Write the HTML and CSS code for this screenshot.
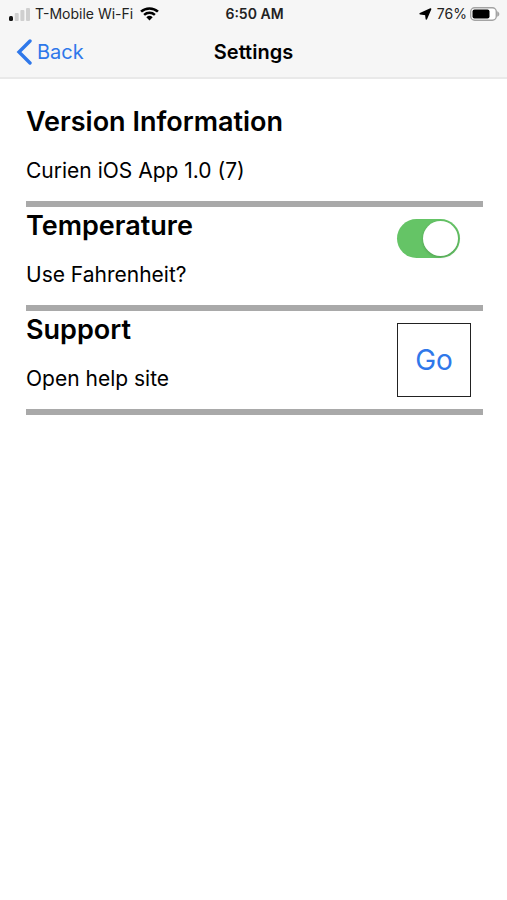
FILE: index.html
```html
<!DOCTYPE html>
<html lang="en">
<head>
    <meta charset="UTF-8">
    <meta name="viewport" content="width=device-width, initial-scale=1.0">
    <title>Settings</title>
    <link rel="stylesheet" href="styles.css">
</head>
<body>
    <header class="header">
        <div class="status-bar">
            <div class="status-left">
                <svg width="21" height="14" viewBox="0 0 21 14" aria-hidden="true">
                    <rect x="0" y="9" width="4" height="5" rx="1.5" fill="#111"/>
                    <rect x="5.7" y="6" width="4" height="8" rx="1" fill="#cfcfcf"/>
                    <rect x="11.4" y="3" width="4" height="11" rx="1" fill="#cfcfcf"/>
                    <rect x="17" y="1" width="4" height="13" rx="1" fill="#cfcfcf"/>
                </svg>
                <span>T-Mobile Wi-Fi</span>
                <svg class="wifi" width="19" height="14" viewBox="0 0 18 14" preserveAspectRatio="none" aria-hidden="true">
                    <path d="M1 4.6a11.6 11.6 0 0 1 16 0" fill="none" stroke="#000" stroke-width="2.5"/>
                    <path d="M3.9 7.8a7.4 7.4 0 0 1 10.2 0" fill="none" stroke="#000" stroke-width="2.3"/>
                    <path d="M6 10.2a4.4 4.4 0 0 1 6 0L9 13.4z" fill="#000"/>
                </svg>
            </div>
            <span class="time">6:50 AM</span>
            <div class="status-right">
                <svg class="location" width="13" height="12" viewBox="0 0 13 12" aria-hidden="true">
                    <path d="M11.6 1L7.4 10.8 6.8 6.4 1.2 5.8z" fill="#000" stroke="#000" stroke-width="1.6" stroke-linejoin="round"/>
                </svg>
                <span>76%</span>
                <svg width="30" height="14" viewBox="0 0 30 14" aria-hidden="true">
                    <rect x=".7" y=".7" width="25.6" height="12.6" rx="4" fill="#fff" stroke="#a3a3a3" stroke-width="1.4"/>
                    <rect x="2.5" y="2.5" width="17" height="9" rx="2" fill="#000"/>
                    <path d="M27.2 4.2c2.8 1 2.8 4.6 0 5.6z" fill="#a3a3a3"/>
                </svg>
            </div>
        </div>
        <nav class="nav-bar">
            <a class="back" href="#">
                <svg width="16" height="26" viewBox="0 0 16 26" aria-hidden="true">
                    <path d="M14 2L3 13l11 11" fill="none" stroke="#2f78ea" stroke-width="3.4" stroke-linecap="round" stroke-linejoin="miter"/>
                </svg>
                Back
            </a>
            <h1>Settings</h1>
        </nav>
    </header>

    <main class="settings">
        <section class="setting">
            <div class="setting-text">
                <h2>Version Information</h2>
                <p>Curien iOS App 1.0 (7)</p>
            </div>
        </section>
        <section class="setting">
            <div class="setting-text">
                <h2>Temperature</h2>
                <p><label for="fahrenheit">Use Fahrenheit?</label></p>
            </div>
            <div class="setting-control">
                <input class="switch" type="checkbox" id="fahrenheit" checked>
            </div>
        </section>
        <section class="setting">
            <div class="setting-text">
                <h2>Support</h2>
                <p>Open help site</p>
            </div>
            <div class="setting-control">
                <button class="go" type="button">Go</button>
            </div>
        </section>
    </main>
</body>
</html>
```
FILE: styles.css
```css
* {
    box-sizing: border-box;
}
body {
    font-family: Inter, "Liberation Sans", sans-serif;
    background-color: #fff;
    color: #000;
    margin: 0;
}
h1, h2, p {
    margin: 0;
}
.header {
    background: #f6f6f6;
    border-bottom: 2px solid #e9e9e9;
}
.status-bar {
    display: grid;
    grid-template-columns: 1fr auto 1fr;
    align-items: center;
    height: 27px;
    padding: 0 7px 0 9px;
    font-size: 14px;
    line-height: 18px;
    color: #222;
}
.status-left, .status-right {
    display: flex;
    align-items: center;
    gap: 5px;
}
.status-right {
    justify-content: flex-end;
    gap: 3px;
}
.wifi {
    margin-left: 2px;
}
.location {
    margin-right: 2px;
}
.time {
    font-weight: 600;
}
.nav-bar {
    display: grid;
    grid-template-columns: 1fr auto 1fr;
    align-items: center;
    height: 50px;
    padding: 0 16px;
}
.back {
    display: flex;
    align-items: center;
    gap: 5px;
    font-size: 20px;
    line-height: 26px;
    color: #2f78ea;
    text-decoration: none;
}
h1 {
    font-size: 20px;
    line-height: 26px;
    font-weight: 600;
}
.settings {
    padding: 24px 24px 24px 26px;
}
.setting {
    display: flex;
    justify-content: space-between;
    border-bottom: 6px solid #a9a9a9;
}
.setting-text {
    display: flex;
    flex-direction: column;
    gap: 16px;
    padding-bottom: 16px;
}
h2 {
    font-size: 27px;
    line-height: 38px;
    font-weight: 600;
}
p {
    font-size: 21px;
    line-height: 28px;
}
.setting-control {
    width: 86px;
    padding-top: 12px;
}
.switch {
    appearance: none;
    display: block;
    width: 63px;
    height: 39px;
    margin: 0;
    padding: 2px;
    border-radius: 20px;
    background: #ddd;
    cursor: pointer;
}
.switch::before {
    content: "";
    display: block;
    width: 35px;
    height: 35px;
    border-radius: 50%;
    background: #fff;
    box-shadow: 0 1px 3px rgba(0, 0, 0, 0.2);
}
.switch:checked {
    background: #65c466;
}
.switch:checked::before {
    margin-left: auto;
}
.go {
    display: block;
    width: 74px;
    height: 74px;
    padding: 0;
    border: 1px solid #222;
    background: #fff;
    color: #2f78ea;
    font-family: inherit;
    font-size: 28px;
    cursor: pointer;
}
```
